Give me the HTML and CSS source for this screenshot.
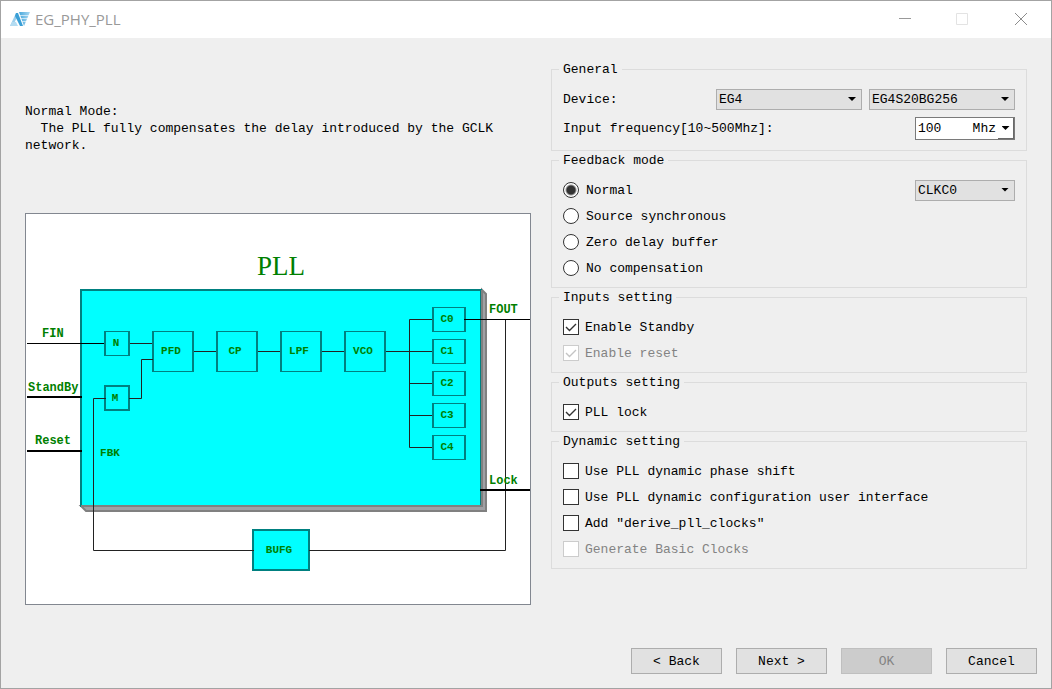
FILE: index.html
```html
<!DOCTYPE html>
<html lang="en">
<head>
<meta charset="utf-8">
<title>EG_PHY_PLL</title>
<link rel="stylesheet" href="styles.css">
</head>
<body>
<div class="window">
  <header class="titlebar">
    <svg class="logo" viewBox="0 0 20 15" width="20" height="15" aria-hidden="true">
      <defs>
        <linearGradient id="fade" x1="0" y1="0" x2="1" y2="0">
          <stop offset="0" stop-color="#4aa8dc"/>
          <stop offset="1" stop-color="#a9d8f1"/>
        </linearGradient>
      </defs>
      <path d="M6 1 L0 14 H3 L7 5 Z" fill="#9ccfec"/>
      <path d="M2 10 H6 L8 14 H0 Z" fill="#b4dcf2"/>
      <path d="M6 1 H8 L13 14 H10 L5 4 Z" fill="#3a9fd6"/>
      <path d="M9 0 H20 L14 14 Z" fill="url(#fade)"/>
      <path d="M10 3.5 H19 M11 6.5 H18 M12 9.5 H17" stroke="#fff" stroke-opacity=".6" fill="none"/>
    </svg>
    <h1 class="title">EG_PHY_PLL</h1>
    <div class="window-controls">
      <button class="window-button" type="button" aria-label="Minimize">
        <svg viewBox="0 0 14 14" width="14" height="14"><path d="M1 5.5H13" stroke="#999" fill="none"/></svg>
      </button>
      <button class="window-button" type="button" aria-label="Maximize" disabled>
        <svg viewBox="0 0 14 14" width="14" height="14"><path d="M.5 .5H11.5V11.5H.5Z" stroke="#e3e3e3" fill="none"/></svg>
      </button>
      <button class="window-button" type="button" aria-label="Close">
        <svg viewBox="0 0 14 14" width="14" height="14"><path d="M1 0L13 12M13 0L1 12" stroke="#8c8c8c" fill="none"/></svg>
      </button>
    </div>
  </header>

  <main class="content">
    <section class="preview">
      <p class="description">Normal Mode:
  The PLL fully compensates the delay introduced by the GCLK network.</p>
      <svg class="diagram" viewBox="26 214 504 390" role="img" aria-label="PLL block diagram">
        <text class="diagram-title" x="281" y="275">PLL</text>

        <path class="shadow" d="M80 505 L86 511 H486 V294 L481 289 V505 Z"/>
        <path class="shadow-edge" d="M81 506 H482 V290 L486 294 V511 H86 Z"/>
        <rect class="block thick" x="81" y="290" width="400" height="216"/>
        <path class="shadow-edge" d="M81 506 H482 V290"/>

        <rect class="block thick" x="253" y="530" width="56" height="40"/>
        <rect class="block thick" x="105" y="386" width="24" height="24"/>
        <g class="block">
          <path d="M105 331.5H129V355.5H105Z"/>
          <path d="M153 331.5H193V371.5H153Z"/>
          <path d="M217 331.5H257V371.5H217Z"/>
          <path d="M281 331.5H321V371.5H281Z"/>
          <path d="M345 331.5H385V371.5H345Z"/>
          <path d="M433 307.5H465V331.5H433Z"/>
          <path d="M433 339.5H465V363.5H433Z"/>
          <path d="M433 371.5H465V395.5H433Z"/>
          <path d="M433 403.5H465V427.5H433Z"/>
          <path d="M433 435.5H465V459.5H433Z"/>
        </g>
        <path class="block-side" d="M105 331V356M129 331V356M153 331V372M193 331V372M217 331V372M257 331V372M281 331V372M321 331V372M345 331V372M385 331V372"/>
        <path class="block-side" d="M433 307V332M465 307V332M433 339V364M465 339V364M433 371V396M465 371V396M433 403V428M465 403V428M433 435V460M465 435V460"/>

        <g class="wire">
          <path d="M130 343.5H152"/>
          <path d="M129 398.5H141.5V359.5H153"/>
          <path d="M194 351.5H216M258 351.5H280M322 351.5H344M386 351.5H432"/>
          <path d="M432 319.5H409.5V447.5H432M409 383.5H432M409 415.5H432"/>
          <path d="M106 398.5H93.5V550.5H254M309 550.5H505.5V320"/>
        </g>
        <path class="port" d="M27 343.5H104M464 319.5H530"/>
        <path class="port port-thick" d="M27 397H82M27 451H82M480 490H530"/>

        <g class="port-label">
          <text x="42" y="337">FIN</text>
          <text x="28" y="391">StandBy</text>
          <text x="35" y="444">Reset</text>
          <text x="489" y="313">FOUT</text>
          <text x="489" y="484">Lock</text>
        </g>
        <g class="block-label">
          <text x="116" y="346">N</text>
          <text x="115" y="401">M</text>
          <text x="171" y="354">PFD</text>
          <text x="235" y="354">CP</text>
          <text x="299" y="354">LPF</text>
          <text x="363" y="354">VCO</text>
          <text x="447" y="322">C0</text>
          <text x="447" y="354">C1</text>
          <text x="447" y="386">C2</text>
          <text x="447" y="418">C3</text>
          <text x="447" y="450">C4</text>
          <text x="110" y="456">FBK</text>
          <text x="279" y="553">BUFG</text>
        </g>
      </svg>
    </section>

    <form class="settings" id="pll-form">
      <fieldset class="group group-general">
        <legend>General</legend>
        <div class="field">
          <label class="field-label" for="device">Device:</label>
          <span class="combo"><select id="device"><option>EG4</option></select></span>
          <span class="combo"><select aria-label="Package"><option>EG4S20BG256</option></select></span>
        </div>
        <div class="field">
          <label class="field-label" for="frequency">Input frequency[10~500Mhz]:</label>
          <span class="unit-box">
            <input id="frequency" type="text" value="100    Mhz">
            <button class="unit-arrow" type="button" aria-label="Choose unit"></button>
          </span>
        </div>
      </fieldset>

      <fieldset class="group">
        <legend>Feedback mode</legend>
        <div class="option">
          <label><input type="radio" name="mode" checked>Normal</label>
          <span class="combo combo-small"><select aria-label="Feedback clock"><option>CLKC0</option></select></span>
        </div>
        <div class="option"><label><input type="radio" name="mode">Source synchronous</label></div>
        <div class="option"><label><input type="radio" name="mode">Zero delay buffer</label></div>
        <div class="option"><label><input type="radio" name="mode">No compensation</label></div>
      </fieldset>

      <fieldset class="group">
        <legend>Inputs setting</legend>
        <div class="option"><label><input type="checkbox" checked>Enable Standby</label></div>
        <div class="option is-disabled"><label><input type="checkbox" checked disabled>Enable reset</label></div>
      </fieldset>

      <fieldset class="group">
        <legend>Outputs setting</legend>
        <div class="option"><label><input type="checkbox" checked>PLL lock</label></div>
      </fieldset>

      <fieldset class="group">
        <legend>Dynamic setting</legend>
        <div class="option"><label><input type="checkbox">Use PLL dynamic phase shift</label></div>
        <div class="option"><label><input type="checkbox">Use PLL dynamic configuration user interface</label></div>
        <div class="option"><label><input type="checkbox">Add "derive_pll_clocks"</label></div>
        <div class="option is-disabled"><label><input type="checkbox" disabled>Generate Basic Clocks</label></div>
      </fieldset>
    </form>
  </main>

  <footer class="actions">
    <button class="action" type="button">&lt; Back</button>
    <button class="action" type="button">Next &gt;</button>
    <button class="action" type="submit" form="pll-form" disabled>OK</button>
    <button class="action" type="button">Cancel</button>
  </footer>
</div>
</body>
</html>
```

FILE: styles.css
```css
* {
  box-sizing: border-box;
}

body {
  margin: 0;
}

body,
button,
input,
select {
  font-family: "Liberation Mono", monospace;
  font-size: 13px;
  line-height: 17px;
  color: #000;
}

.window {
  display: flex;
  flex-direction: column;
  min-height: 100vh;
  border: 1px solid #a3a3a3;
  background: #efefef;
}

/* Title bar */
.titlebar {
  display: flex;
  align-items: center;
  gap: 5px;
  height: 37px;
  padding-left: 9px;
  background: #fff;
}

.title {
  flex: 1;
  margin: 0;
  padding-bottom: 2px;
  font: 15px/20px "Open Sans", sans-serif;
  color: #999;
}

.window-controls {
  display: flex;
  padding-right: 1px;
}

.window-button {
  display: grid;
  place-items: center;
  width: 58px;
  height: 37px;
  padding: 0;
  border: 0;
  background: none;
}

/* Main area */
.content {
  display: grid;
  grid-template-columns: minmax(0, 506fr) minmax(0, 476fr);
  gap: 20px;
  flex: 1;
  padding: 22px 24px;
}

.description {
  margin: 43px 0 59px;
  white-space: pre-wrap;
}

.diagram {
  display: block;
  width: 100%;
  border: 1px solid #828790;
  background: #fff;
}

/* Block diagram */
.diagram-title {
  font: 27px "Liberation Serif", serif;
  text-anchor: middle;
  fill: #008000;
}

.shadow {
  fill: #a0a0a4;
}

.shadow-edge {
  fill: none;
  stroke: #808080;
  stroke-width: 2px;
}

.block {
  fill: #0ff;
  stroke: #008080;
}

.block-side {
  fill: none;
  stroke: #008080;
  stroke-width: 2px;
}

.thick {
  stroke-width: 2px;
}

.wire {
  fill: none;
  stroke: #222;
}

.port {
  stroke: #000;
}

.port-thick {
  stroke-width: 2px;
}

.port-label {
  font: bold 12px "Liberation Mono", monospace;
  fill: #008000;
}

.block-label {
  font: bold 11px "Liberation Mono", monospace;
  text-anchor: middle;
  fill: #008000;
}

/* Setting groups */
.settings {
  display: flex;
  flex-direction: column;
}

.group {
  min-width: 0;
  margin: 0;
  padding: 8px 11px 6px;
  border: 1px solid #dcdcdc;
}

.group legend {
  margin-left: -4px;
  padding: 2px 4px 0;
  line-height: 16px;
}

.group-general {
  padding: 11px 11px 10px;
}

.field {
  display: flex;
  align-items: center;
  gap: 7px;
}

.field + .field {
  margin-top: 7px;
}

.field-label {
  flex: 1;
}

.option {
  display: flex;
  align-items: center;
  justify-content: space-between;
  height: 26px;
}

.option label {
  display: flex;
  align-items: center;
  gap: 6px;
}

.is-disabled {
  color: #838383;
}

/* Drop-downs */
.combo {
  position: relative;
  display: flex;
  width: 146px;
}

.combo-small {
  width: 100px;
}

.combo select {
  width: 100%;
  height: 21px;
  padding: 0 18px 0 2px;
  border: 1px solid #adadad;
  border-radius: 0;
  background: #e1e1e1;
  appearance: none;
}

.combo::after,
.unit-arrow::after {
  content: "";
  width: 8px;
  height: 4px;
  background: #000;
  clip-path: polygon(0 0, 100% 0, 50% 100%);
}

.combo::after {
  position: absolute;
  top: 8px;
  right: 6px;
  pointer-events: none;
}

.unit-box {
  display: flex;
  width: 100px;
  height: 23px;
  border: 1px solid #7a7a7a;
  background: #fff;
}

.unit-box input {
  flex: 1;
  min-width: 0;
  padding: 0 0 0 2px;
  border: 0;
  background: none;
  outline: 0;
}

.unit-arrow {
  display: grid;
  place-items: center;
  width: 16px;
  padding: 0;
  border: solid #696969;
  border-width: 0 1px 1px 0;
  background: #fff;
}

/* Radio buttons and tick boxes */
input[type="radio"],
input[type="checkbox"] {
  width: 16px;
  height: 16px;
  margin: 0;
  border: 1px solid #333;
  background: #fff center / 14px 14px no-repeat;
  appearance: none;
}

input[type="radio"] {
  margin-right: 1px;
  border-radius: 50%;
}

input[type="radio"]:checked {
  background-image: radial-gradient(circle, #333 4px, #fff 6px);
}

input[type="checkbox"]:checked {
  background-image: url("data:image/svg+xml,%3Csvg xmlns='http://www.w3.org/2000/svg' viewBox='0 0 14 14'%3E%3Cpath d='M2 7l3.5 3.5L12 4' fill='none' stroke='%23333' stroke-width='1.4'/%3E%3C/svg%3E");
}

input[type="checkbox"]:disabled {
  border-color: #ccc;
}

input[type="checkbox"]:checked:disabled {
  background-image: url("data:image/svg+xml,%3Csvg xmlns='http://www.w3.org/2000/svg' viewBox='0 0 14 14'%3E%3Cpath d='M2 7l3.5 3.5L12 4' fill='none' stroke='%23c4c4c4' stroke-width='1.4'/%3E%3C/svg%3E");
}

/* Wizard buttons */
.actions {
  display: flex;
  justify-content: flex-end;
  gap: 14px;
  padding: 0 14px 14px;
}

.action {
  width: 91px;
  height: 26px;
  padding: 0;
  border: 1px solid #adadad;
  background: #e1e1e1;
}

.action:disabled {
  border-color: #bfbfbf;
  background: #ccc;
  color: #838383;
}
```
